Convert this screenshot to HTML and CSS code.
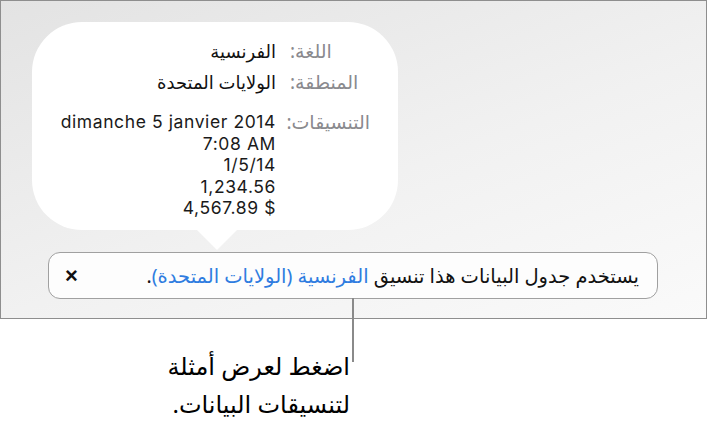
FILE: index.html
```html
<!DOCTYPE html>
<html lang="ar" dir="rtl">
<head>
<meta charset="utf-8">
<link rel="stylesheet" href="styles.css">
</head>
<body>
<div class="page">
  <div class="frame">
    <div class="popover">
      <div class="grid">
        <div class="label">اللغة:</div>
        <div class="value">الفرنسية</div>
        <div class="label">المنطقة:</div>
        <div class="value">الولايات المتحدة</div>
        <div class="label third">التنسيقات:</div>
        <div class="value latin third">
          <div>dimanche 5 janvier 2014</div>
          <div>7:08 AM</div>
          <div>1/5/14</div>
          <div>1,234.56</div>
          <div>4,567.89 $</div>
        </div>
      </div>
    </div>
    <div class="banner">
      <span class="msg">يستخدم جدول البيانات هذا تنسيق <span class="link">الفرنسية (الولايات المتحدة)</span>.</span>
      <span class="close">×</span>
    </div>
  </div>
  <div class="callout-line"></div>
  <div class="callout">اضغط لعرض أمثلة<br>لتنسيقات البيانات.</div>
</div>
</body>
</html>
```
FILE: styles.css
```css
html, body {
  margin: 0;
  padding: 0;
  background: #ffffff;
}
body {
  width: 708px;
  height: 428px;
  overflow: hidden;
  font-family: "Noto Sans", "DejaVu Sans", sans-serif;
}
.page {
  position: relative;
  width: 708px;
  height: 428px;
  direction: ltr;
}
.frame {
  box-sizing: border-box;
  width: 707px;
  height: 319px;
  border: 1px solid #8e8e8e;
  background: linear-gradient(160deg, #e3e3e3 0%, #f1f1f1 55%, #fafafa 100%);
  padding: 21px 0 0 31px;
}
.popover {
  position: relative;
  box-sizing: border-box;
  width: 366px;
  height: 208px;
  background: #ffffff;
  border-radius: 50px;
  direction: rtl;
  padding: 18px 28px 0 0;
}
.popover::after {
  content: "";
  position: absolute;
  left: 165px;
  top: 208px;
  width: 0;
  height: 0;
  border-left: 20px solid transparent;
  border-right: 20px solid transparent;
  border-top: 20px solid #ffffff;
}
.grid {
  display: grid;
  grid-template-columns: 80px auto;
  justify-content: start;
  column-gap: 14px;
  row-gap: 8px;
  line-height: 23px;
}
.label {
  color: #8a8a8e;
  font-size: 19px;
  text-align: left;
  white-space: nowrap;
}
.value {
  color: #111111;
  font-size: 18px;
  font-weight: 500;
}
.third {
  margin-top: 9px;
}
.value.latin {
  font-family: "Inter", "Liberation Sans", sans-serif;
  font-weight: 400;
  font-size: 17.5px;
  letter-spacing: 0.6px;
  line-height: 21.5px;
  color: #1a1a1a;
  text-align: right;
}
.latin div {
  direction: ltr;
  text-align: right;
}
.banner {
  box-sizing: border-box;
  margin: 22px 0 0 16px;
  width: 610px;
  height: 47px;
  border: 1px solid #a0a0a0;
  border-radius: 12px;
  background: #fdfdfd;
  direction: rtl;
  display: flex;
  align-items: center;
  justify-content: space-between;
  padding: 0 18px 0 16px;
  font-size: 19.5px;
  color: #111111;
}
.link {
  color: #2f7ce0;
}
.close {
  font-family: "Liberation Sans", sans-serif;
  font-weight: bold;
  font-size: 22px;
}
.callout-line {
  position: absolute;
  left: 352px;
  top: 298px;
  width: 1.5px;
  height: 64px;
  background: #8a8a8a;
}
.callout {
  position: absolute;
  right: 358px;
  top: 347px;
  direction: rtl;
  text-align: right;
  font-size: 24px;
  line-height: 38px;
  color: #000;
}
```
